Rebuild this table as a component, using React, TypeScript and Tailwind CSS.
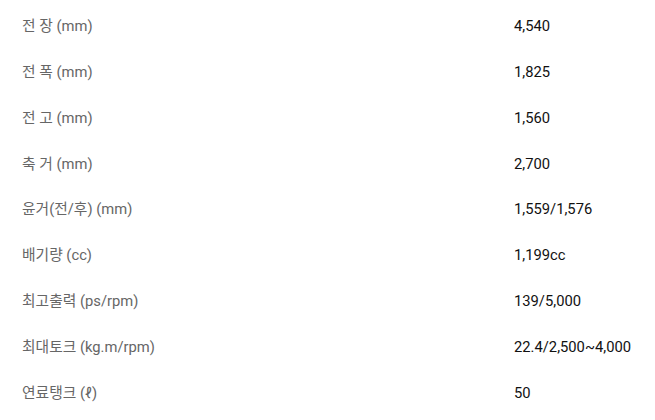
const specs: [string, string][] = [
  ["전 장 (mm)", "4,540"],
  ["전 폭 (mm)", "1,825"],
  ["전 고 (mm)", "1,560"],
  ["축 거 (mm)", "2,700"],
  ["윤거(전/후) (mm)", "1,559/1,576"],
  ["배기량 (cc)", "1,199cc"],
  ["최고출력 (ps/rpm)", "139/5,000"],
  ["최대토크 (kg.m/rpm)", "22.4/2,500~4,000"],
  ["연료탱크 (ℓ)", "50"],
];

export default function App() {
  return (
    <div
      className="h-[420px] w-[655px] bg-white pt-[3px] text-[14.75px]"
      style={{ fontFamily: 'Roboto, "Noto Sans CJK KR", sans-serif' }}
    >
      {specs.map(([label, value]) => (
        <div key={label} className="flex h-[45.9px] items-center">
          <div className="w-[514px] pl-[22px] text-[#666]">{label}</div>
          <div className="text-[#111]">{value}</div>
        </div>
      ))}
    </div>
  );
}
